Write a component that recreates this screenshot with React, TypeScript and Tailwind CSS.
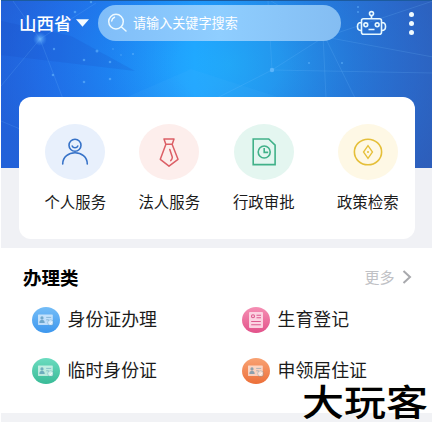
import React from "react";

const services = [
  { label: "个人服务", bg: "bg-[#e8f0fc]", gap: "", icon: <PersonIcon /> },
  { label: "法人服务", bg: "bg-[#fdeeec]", gap: "ml-[33.5px]", icon: <TieIcon /> },
  { label: "行政审批", bg: "bg-[#e4f6f0]", gap: "ml-[34px]", icon: <FileClockIcon /> },
  { label: "政策检索", bg: "bg-[#fef8e5]", gap: "ml-[43.5px]", icon: <CoinIcon /> },
];

const links = [
  { label: "身份证办理", bg: "bg-linear-to-b from-[#74bdf7] to-[#3c97ee]", kind: "card" },
  { label: "生育登记", bg: "bg-linear-to-b from-[#f58fb4] to-[#e2518a]", kind: "form" },
  { label: "临时身份证", bg: "bg-linear-to-b from-[#6bdcc0] to-[#38bb97]", kind: "card" },
  { label: "申领居住证", bg: "bg-linear-to-b from-[#f8a273] to-[#ec6f38]", kind: "card" },
];

function PersonIcon() {
  return (
    <svg width="30" height="30" viewBox="0 0 30 30" fill="none" stroke="#3672c8" strokeWidth="1.6" strokeLinecap="round">
      <circle cx="15" cy="8.3" r="6" />
      <path d="M12.2 9c.9 2.3 4.7 2.3 5.6 0M2.7 27c0-15 24.6-15 24.6 0" />
    </svg>
  );
}

function TieIcon() {
  return (
    <svg width="30" height="30" viewBox="0 0 30 30" fill="none" stroke="#dc5f66" strokeWidth="1.5" strokeLinejoin="round" strokeLinecap="round">
      <path d="M10 2h10l-1.8 5.3h-6.4zM11.8 7.5 6.3 22.3 15 29.2l9-6.9L18.2 7.5M15.8 12.5l2.4 7.2c.4 1.5-.2 2.5-1.4 3.9" />
    </svg>
  );
}

function FileClockIcon() {
  return (
    <svg width="30" height="30" viewBox="0 0 30 30" fill="none" stroke="#41b189" strokeWidth="1.6">
      <path d="M4.2 2h15.5l6.4 6.2v19.4H4.2z" />
      <circle cx="15.2" cy="15" r="6" />
      <path d="M15.2 11v4.4h4" />
    </svg>
  );
}

function CoinIcon() {
  return (
    <svg width="30" height="30" viewBox="0 0 30 30" fill="none" stroke="#e5bf39" strokeWidth="1.6">
      <ellipse cx="15" cy="15" rx="13.6" ry="12.8" />
      <path d="M15 8.7 19.5 15 15 21.3 10.5 15z" strokeWidth="1.3" />
      <circle cx="15" cy="15" r="1" fill="#e5bf39" stroke="none" />
    </svg>
  );
}

function RobotIcon() {
  return (
    <svg className="ml-[15px]" width="31" height="26" viewBox="0 0 31 26" fill="none" stroke="#e6f8ff" strokeWidth="1.6">
      <circle cx="15.5" cy="3.6" r="2" />
      <path d="M15.5 5.6v3M5.5 12v-1.2a2 2 0 0 1 2-2h16a2 2 0 0 1 2 2v11.4a2 2 0 0 1-2 2h-16a2 2 0 0 1-2-2zM5 12.5c-4.7 0-4.7 8 0 8M26 12.5c4.7 0 4.7 8 0 8M12.5 19.5h6" />
      <circle cx="9.8" cy="14.8" r="1.9" />
      <circle cx="21.2" cy="14.8" r="1.9" />
    </svg>
  );
}

function CardGlyph() {
  return (
    <svg width="18" height="14" viewBox="0 0 18 14" fill="none">
      <rect x="1" y="1.5" width="14.8" height="10.4" rx=".6" fill="#fff" fillOpacity=".62" />
      <g fill="#1f6f9c" fillOpacity=".5">
        <circle cx="5" cy="4.9" r="1.6" />
        <path d="M2.3 10c0-4.2 5.4-4.2 5.4 0z" />
      </g>
      <path d="M9.2 4.4h5M9.2 6.8h2.6" stroke="#1f6f9c" strokeOpacity=".35" />
      <circle cx="13.6" cy="9.7" r="2.9" fill="#fff" fillOpacity=".3" stroke="#1f6f9c" strokeOpacity=".3" strokeWidth=".8" />
      <path d="m12.3 9.7 1 1 1.7-1.9" stroke="#fff" strokeWidth=".8" />
    </svg>
  );
}

function FormGlyph() {
  return (
    <svg width="16" height="18" viewBox="0 0 16 18" fill="none" stroke="#dd5a8e" strokeWidth="1.1">
      <rect x="1" y="1" width="14" height="16" rx="1" fill="#fbd3e1" stroke="none" />
      <circle cx="5" cy="5.2" r="1.5" />
      <path d="M8.5 4.2H13M8.5 6.8H13M3.2 10.5h9.6M3.2 13.8h9.6" />
    </svg>
  );
}

// Network of faint lines and dots behind the header
function HeroTexture() {
  return (
    <svg className="absolute inset-0" width="431" height="168" viewBox="0 0 431 168" fill="none">
      <defs>
        <radialGradient id="spark">
          <stop stopColor="#7cc4ff" stopOpacity=".8" />
          <stop offset="1" stopColor="#4ba0ff" stopOpacity="0" />
        </radialGradient>
      </defs>
      <path d="M0 20 70 35l64 35L0 54z" fill="#1746bd" fillOpacity=".16" />
      <path d="M135 92 190 68l90 29H125z" fill="#65b9ff" fillOpacity=".08" />
      <path
        d="M0 85 39 38 12 0M39 38l23 60M39 38 95 2M271 69 326 34l-56-34M271 69l161 3M271 69l-55 28M271 69l-4-69M322 34l3 63M324 36l30 61M324 36l108 20M324 36 432 0M0 120l19 8"
        stroke="#7dc5ff"
        strokeOpacity=".17"
      />
      <circle cx="39" cy="38" r="7" fill="url(#spark)" />
      <circle cx="271" cy="69" r="2.2" fill="#6bbcff" fillOpacity=".75" />
      <g fill="#6bbcff" fillOpacity=".55">
        <circle cx="74" cy="11" r="1.3" />
        <circle cx="53" cy="48" r="1.2" />
        <circle cx="96" cy="50" r="1.5" />
        <circle cx="83" cy="59" r="1.3" />
        <circle cx="109" cy="61" r="1.3" />
        <circle cx="52" cy="74" r="1.3" />
        <circle cx="83" cy="81" r="1.3" />
        <circle cx="109" cy="78" r="1.3" />
        <circle cx="112" cy="48" r=".8" />
        <circle cx="120" cy="54" r=".8" />
        <circle cx="132" cy="53" r="1" />
        <circle cx="90" cy="1" r="1.2" />
        <circle cx="357" cy="6" r="1" />
        <circle cx="357" cy="11" r="1" />
        <circle cx="308" cy="62" r="1" />
        <circle cx="341" cy="62" r="1" />
      </g>
    </svg>
  );
}

export default function App() {
  return (
    <div className="relative h-[427px] w-[432px] overflow-hidden bg-white pl-px font-['Noto_Sans_CJK_SC',sans-serif] text-[#1b1b1b]">
      {/* Header */}
      <header className="relative h-[168px] border-t border-[#1c5b9e] bg-[radial-gradient(ellipse_240px_170px_at_53%_38%,#20aeff_0%,#20a6ff_22%,#1e8cf6_50%,#2376ea_78%,#2763d2_100%)]">
        <div className="absolute inset-0 bg-linear-to-r from-[#1c5fe0]/50 via-transparent via-45% to-[#315bab]/60" />
        <HeroTexture />
        <div className="relative flex h-11 items-center pl-[18px] text-white">
          <span className="w-[54px] text-[17.5px] leading-none font-medium whitespace-nowrap">山西省</span>
          <svg className="ml-[3px]" width="13" height="8" viewBox="0 0 13 8">
            <path d="M0 .3h13L6.5 7.7z" fill="#f3fbff" />
          </svg>
          <div className="ml-[9px] flex h-9 w-[243px] items-center rounded-full bg-linear-to-r from-[#80bdf8] via-[#8fceff] to-[#84bdf2] pl-[9px]">
            <svg width="21" height="20" viewBox="0 0 21 20" fill="none" stroke="#eefaff" strokeWidth="1.5" strokeLinecap="round">
              <circle cx="9" cy="8.6" r="7.3" />
              <path d="m14.5 14 4.5 4M4.7 8c.2-2 1.2-3.2 2.8-3.8" />
            </svg>
            <span className="ml-[5px] text-[13.1px] leading-none">请输入关键字搜索</span>
          </div>
          <RobotIcon />
          <div className="ml-[22px] flex flex-col gap-1">
            <i className="size-[5px] rounded-full bg-[#f0fbff]" />
            <i className="size-[5px] rounded-full bg-[#f0fbff]" />
            <i className="size-[5px] rounded-full bg-[#f0fbff]" />
          </div>
        </div>
      </header>

      {/* Services */}
      <section className="h-20 bg-[#f0f1f5] pl-[18px]">
        <div className="relative -top-[71px] flex h-[142px] w-[396px] rounded-xl bg-white pt-[27px] pl-[26px]">
          {services.map((item) => (
            <div key={item.label} className={`flex w-[60.5px] shrink-0 flex-col items-center ${item.gap}`}>
              <div className={`flex h-14 w-[60px] items-center justify-center rounded-[50%] ${item.bg}`}>
                {item.icon}
              </div>
              <span className="mt-[13px] text-[15.4px] leading-4 whitespace-nowrap">{item.label}</span>
            </div>
          ))}
        </div>
      </section>

      {/* Handling list */}
      <section className="h-[165px] pt-[17px]">
        <div className="flex h-6 items-center pl-[22px]">
          <h2 className="text-[18.5px] leading-6 font-bold text-black">办理类</h2>
          <span className="ml-[286px] text-[15px] leading-6 text-[#c0c1c5]">更多</span>
          <svg className="ml-[7px]" width="10" height="14" viewBox="0 0 10 14" fill="none" stroke="#a8a9ad" strokeWidth="2">
            <path d="m1.5 1 6.5 6-6.5 6" />
          </svg>
        </div>
        <div className="mt-[18px] grid grid-cols-[210px_1fr] gap-y-[25px] pl-[31px]">
          {links.map((item) => (
            <div key={item.label} className="flex h-[26px] items-center">
              <span className={`flex h-[26px] w-7 items-center justify-center rounded-[50%] ${item.bg}`}>
                {item.kind === "card" ? <CardGlyph /> : <FormGlyph />}
              </span>
              <span className="relative -top-[2px] ml-[7.5px] text-[17.9px] leading-[18px]">{item.label}</span>
            </div>
          ))}
        </div>
      </section>
      <div className="h-[9px] bg-[#f1f2f5]" />

      {/* Watermark */}
      <div className="absolute top-[383px] left-[302px] origin-top-left scale-x-115 text-[36.5px] leading-9 font-medium whitespace-nowrap text-black [paint-order:stroke] [-webkit-text-stroke:1px_#fbfaf0]">
        大玩客
      </div>
    </div>
  );
}
